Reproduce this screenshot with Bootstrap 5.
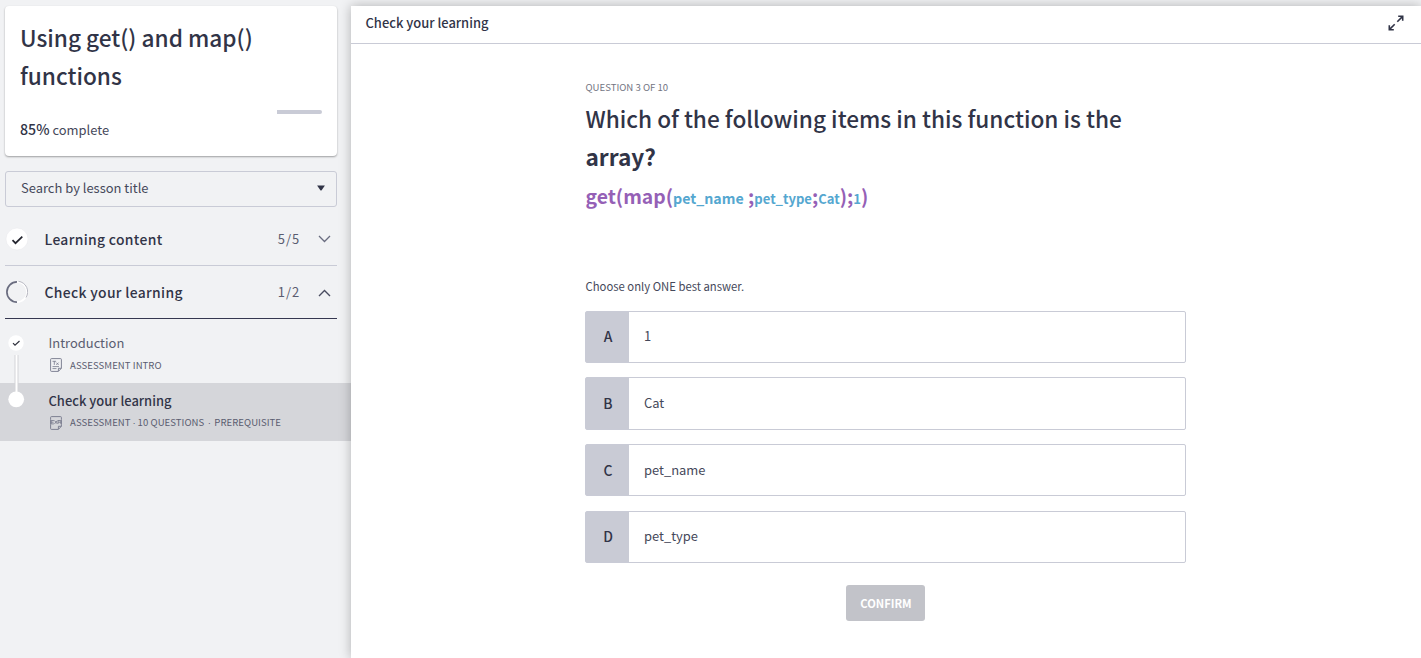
<!DOCTYPE html>
<html lang="en">
<head>
<meta charset="utf-8">
<meta name="viewport" content="width=device-width, initial-scale=1">
<title>Using get() and map() functions</title>
<link rel="stylesheet" href="https://cdn.jsdelivr.net/npm/bootstrap@5.3.0/dist/css/bootstrap.min.css">
<script src="https://cdn.jsdelivr.net/npm/bootstrap@5.3.0/dist/js/bootstrap.bundle.min.js"></script>
<style>
:root{--ink:#313447;--soft:#5a5d70;--line:#c9cbd6}
body{font-family:"Noto Sans CJK SC","Liberation Sans",sans-serif;font-size:12.95px;line-height:20px;color:var(--ink);background:#f1f2f4;overflow:hidden}
.side{width:351px;flex:none;padding-top:6px}
.course{margin:0 14px 0 5px;height:150px;padding:13px 15px 0;border:0;border-radius:4px;box-shadow:0 1px 2px rgba(0,0,0,.35)}
.course h1,.quest h2{font-size:22.64px;line-height:38px;font-weight:500;margin:0;color:var(--ink)}
.track{height:4px;margin-top:15px;background:transparent;border-radius:2px;justify-content:space-between}
.track-left{width:15%;background:var(--line);border-radius:0 2px 2px 0}
.done{margin-top:5px;line-height:20px;color:#45485a}
.done b{font-size:14.2px;font-weight:500;color:var(--ink)}
.search{margin:15px 14px 0 5px;height:36px;padding:0 11px 2px 15px;border:1px solid var(--line);border-radius:3px;color:#45485a;background:transparent}
.sect{margin:0 14px 0 5px;height:53px;border-bottom:1px solid var(--line)}
.sect.first{height:59px;padding-top:6px}
.sect.open{border-color:#353750}
.sect .ttl{font-size:13.9px;font-weight:500;letter-spacing:.33px;margin-left:16.5px}
.sect .cnt{letter-spacing:.9px;color:var(--soft);margin-right:18px}
.sect .arrow{margin-right:6px}
.sect.open .arrow{margin-top:2px}
.steps{padding-top:6px}
.step{height:58px;padding:8px 0 0 8px}
.step.on{background:#d5d6da}
.step .txt{margin-left:24.5px;color:var(--soft)}
.step .name{line-height:20px}
.step.on .name{font-weight:500;color:var(--ink)}
.meta{font-size:9.57px;letter-spacing:.05px;line-height:14px;margin-top:5px;color:var(--soft)}
.step.on .meta{margin-top:4px}
.meta svg{margin:0 8.6px 0 1px}
.dot{display:inline-block;text-align:center;font-family:"Liberation Sans",sans-serif}
.rail{left:8px;top:8px;z-index:2}
.panel{margin-top:6px;height:652px;background:#fff;box-shadow:0 0 11px rgba(0,0,0,.27);min-width:0}
.bar{height:38px;border-bottom:1px solid var(--line);padding:0 17px 3px 14.5px;font-weight:500}
.quest{width:601px;margin:36px 0 0 234px}
.quest h2,.eyebrow,.hint,.code{padding-left:.5px}
.eyebrow{font-size:9.6px;line-height:15px;color:#737582;margin-bottom:5px}
.code{font-size:19.35px;font-weight:700;line-height:40px;color:#9560b6;white-space:pre;display:flex;align-items:baseline}
.code i{font-style:normal;font-size:13.04px;color:#55a7d0}
.code .lg{font-size:14.2px}
.hint{font-size:11.3px;line-height:18px;margin:58px 0 15.8px;color:#45485a}
.answer{height:52.2px;border:1px solid var(--line);border-radius:2px;margin-bottom:14.47px;color:#45485a}
.answer .key{width:43px;background:#c9cbd5;font-size:13.9px;font-weight:500;color:var(--ink);padding:0 0 1px 1px}
.answer .val{padding:0 0 1.4px 15px}
.confirm{width:79px;height:36px;padding:0 0 0 1px;font-size:11.2px;font-weight:700;color:#fff;background:#c2c3c9;border:0;border-radius:3px;margin-top:7.5px}
.confirm:disabled{color:#fff;background:#c2c3c9;opacity:1}
</style>
</head>
<body>
<div class="d-flex vh-100">
  <aside class="side">
    <div class="card course">
      <h1>Using get() and map() functions</h1>
      <div class="d-flex track"><span></span><span class="track-left"></span></div>
      <div class="done"><b>85%</b> complete</div>
    </div>
    <div class="search d-flex align-items-center justify-content-between">
      <span>Search by lesson title</span>
      <svg width="8" height="6" viewBox="0 0 8 6"><path d="M.1 .5h7.8L4.8 4.9Q4 5.900 3.200 4.900z" fill="#313447"/></svg>
    </div>
    <div class="sect first d-flex align-items-center">
      <svg width="23" height="24" viewBox="0 0 23 24"><circle cx="12" cy="12" r="11" fill="#fff" stroke="#e6e7ea" stroke-width=".5"/><path d="M7.500 13.200l3 3 6.800-6.600" fill="none" stroke="#24252f" stroke-width="1.700"/></svg>
      <span class="ttl">Learning content</span>
      <span class="cnt ms-auto">5/5</span>
      <svg class="arrow" width="13" height="8" viewBox="0 0 13 8"><path d="M1 1l5.500 5.500L12 1" fill="none" stroke="#696c7f" stroke-width="1.300"/></svg>
    </div>
    <div class="sect open d-flex align-items-center">
      <svg width="23" height="24" viewBox="0 0 23 24"><circle cx="12" cy="12" r="10" fill="none" stroke="#fff" stroke-width="1.600"/><path d="M13.500 1.300A10.600 10.600 0 0 1 21 17.500" fill="none" stroke="#a4a6b1" stroke-width=".8"/><path d="M12 1.900A10.100 10.100 0 0 0 12 22.100" fill="none" stroke="#696c7f" stroke-width="1.700"/></svg>
      <span class="ttl">Check your learning</span>
      <span class="cnt ms-auto">1/2</span>
      <svg class="arrow" width="13" height="8" viewBox="0 0 13 8"><path d="M1 7l5.500-5.500L12 7" fill="none" stroke="#494c60" stroke-width="1.400"/></svg>
    </div>
    <div class="steps">
      <div class="step d-flex position-relative">
        <svg class="rail position-absolute" width="17" height="76" viewBox="0 0 17 76"><circle cx="8" cy="10" r="7.700" fill="#fff"/><path d="M5 10.200l2 2 4.500-4.200" fill="none" stroke="#30323e" stroke-width="1.200"/><path d="M6.500 22h4v36h-4z" fill="#d3d4d8"/><path d="M7.500 22h2v38h-2z" fill="#fff"/><circle cx="8.200" cy="66.300" r="7.900" fill="#fff"/></svg>
        <div class="txt ps-3">
          <div class="name">Introduction</div>
          <div class="meta d-flex align-items-center">
            <svg width="12" height="14" viewBox="0 0 12 14" fill="none" stroke="#737689"><path d="M1.500.6h9q.9 0 .9.900v8.800l-3 3.100H1.500q-.9 0-.9-.9V1.500q0-.9.900-.9zM8.400 13.200v-2.900h2.800" stroke-width=".9"/><path d="M2.500 3.300h3.600M4.300 3.300v3.600M6.300 4.600l2.300 2.300M8.600 4.600L6.300 6.900M2.500 8.600h6.500M2.500 10.600h4" stroke-width=".8"/></svg>
            <span>ASSESSMENT INTRO</span>
          </div>
        </div>
      </div>
      <div class="step on d-flex">
        <div class="txt ps-3">
          <div class="name">Check your learning</div>
          <div class="meta d-flex align-items-center">
            <svg width="12" height="14" viewBox="0 0 12 14" fill="none" stroke="#737689"><path d="M.6 3.500v-2q0-.9.900-.9h9q.9 0 .9.900v2M11.400 8.800v1.500l-3 3.100H1.500q-.9 0-.9-.9V8.800M8.400 13.200v-2.900h2.800M.6 3.500v5.300M11.400 3.500v5.300" stroke-width=".9"/><path d="M3.900 4.500H1.200v3.400h2.700M1.200 6.200h2.300M4.500 4.500l2.800 3.400M7.300 4.500L4.500 7.900M8 7.900V4.500h2.800v3.400M8 6.200h2.800" stroke-width=".8"/></svg>
            <span>ASSESSMENT<span class="dot" style="width:7px">·</span>10 QUESTIONS<span class="dot" style="width:10px">·</span>PREREQUISITE</span>
          </div>
        </div>
      </div>
    </div>
  </aside>
  <main class="panel flex-grow-1 position-relative">
    <div class="bar d-flex align-items-center justify-content-between">
      <span>Check your learning</span>
      <svg width="16" height="16" viewBox="0 0 16 16" fill="none" stroke="#313447" stroke-width="1.600"><path d="M9.300 6.700L14.400 1.600M10.200 1.300h4.500v4.500M6.700 9.300L1.600 14.400M1.300 10.200v4.500h4.500"/></svg>
    </div>
    <section class="quest">
      <div class="eyebrow">QUESTION 3 OF 10</div>
      <h2>Which of the following items in this function is the <b>array?</b></h2>
      <div class="code">get(map(<i class="lg">pet_name</i> ;<i>pet_type</i>;<i>Cat</i>);<i>1</i>)</div>
      <div class="hint">Choose only ONE best answer.</div>
      <div class="answer d-flex"><div class="key d-flex align-items-center justify-content-center">A</div><div class="val d-flex align-items-center">1</div></div>
      <div class="answer d-flex"><div class="key d-flex align-items-center justify-content-center">B</div><div class="val d-flex align-items-center">Cat</div></div>
      <div class="answer d-flex"><div class="key d-flex align-items-center justify-content-center">C</div><div class="val d-flex align-items-center">pet_name</div></div>
      <div class="answer d-flex"><div class="key d-flex align-items-center justify-content-center">D</div><div class="val d-flex align-items-center">pet_type</div></div>
      <div class="text-center"><button class="btn confirm" disabled>CONFIRM</button></div>
    </section>
  </main>
</div>
</body>
</html>
